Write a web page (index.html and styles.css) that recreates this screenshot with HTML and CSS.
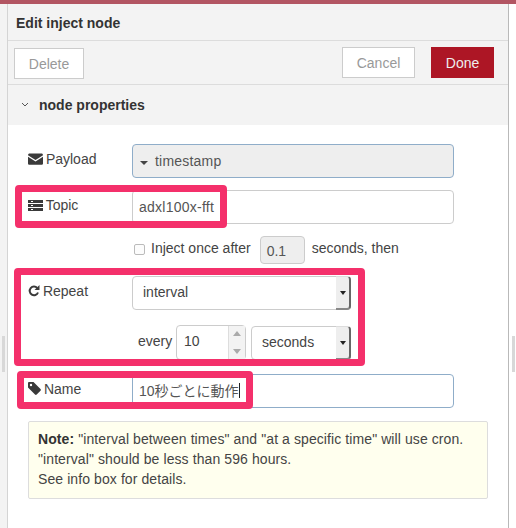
FILE: index.html
```html
<!DOCTYPE html>
<html lang="ja">
<head>
<meta charset="utf-8">
<title>Edit inject node</title>
<link rel="stylesheet" href="styles.css">
</head>
<body>
<div class="topbar"></div>
<div class="shell">
  <aside class="gutter gutter-left"><span class="handle"></span></aside>
  <main class="tray">
    <h1 class="tray-title">Edit inject node</h1>
    <div class="toolbar">
      <button class="btn btn-delete">Delete</button>
      <div class="toolbar-right">
        <button class="btn btn-cancel">Cancel</button>
        <button class="btn btn-done">Done</button>
      </div>
    </div>
    <div class="section-head">
      <svg class="chev" width="8" height="5" viewBox="0 0 8 5"><path d="M1 1l3 3 3-3" fill="none" stroke="#555" stroke-width="1"/></svg>
      <span>node properties</span>
    </div>
    <div class="form">
      <div class="row row-payload">
        <label class="lbl">
          <svg class="ico" width="15" height="12" viewBox="0 0 15 12"><path d="M0 2.2C0 1 .8.5 1.5.5h12c.8 0 1.500.6 1.500 1.700L7.500 7 0 2.200z" fill="#3a3a3a"/><path d="M0 3.800l7.500 4.700L15 3.800v6.700c0 .8-.7 1.300-1.500 1.300h-12C.7 11.800 0 11.300 0 10.500z" fill="#3a3a3a"/></svg>
          Payload
        </label>
        <div class="typed"><span class="caret-down"></span>timestamp</div>
      </div>
      <div class="row row-topic">
        <label class="lbl">
          <svg class="ico" width="15" height="11" viewBox="0 0 15 11"><path d="M0 0h15v3H0zM0 4h15v3H0zM0 8h15v3H0z" fill="#3a3a3a"/><path d="M3 1.500h2M3 5.500h2M3 9.500h2" stroke="#fff" stroke-width="1"/></svg>
          Topic
        </label>
        <div class="field field-topic">adxl100x-fft</div>
      </div>
      <div class="row row-once">
        <span class="check"></span>
        <span class="once-text">Inject once after</span>
        <span class="mini">0.1</span>
        <span class="once-text">seconds, then</span>
      </div>
      <div class="row row-repeat">
        <label class="lbl">
          <svg class="ico ico-r" width="12" height="12" viewBox="0 0 12 12"><path d="M10 7.500A4.300 4.300 0 1 1 9.200 3" fill="none" stroke="#3a3a3a" stroke-width="2"/><path d="M11.500 0v5h-5z" fill="#3a3a3a"/></svg>
          Repeat
        </label>
        <div class="select select-wide">interval<span class="arrow"></span></div>
      </div>
      <div class="row row-every">
        <span class="every">every</span>
        <div class="spin">10<span class="spin-btns"><i class="up"></i><i class="down"></i></span></div>
        <div class="select select-unit">seconds<span class="arrow"></span></div>
      </div>
      <div class="row row-name">
        <label class="lbl">
          <svg class="ico ico-r" width="13" height="13" viewBox="0 0 13 13"><path d="M0 1.200C0 .5.500 0 1.200 0h4.300l7 7c.5.5.5 1.200 0 1.700l-3.800 3.800c-.5.5-1.200.5-1.700 0l-7-7zM3 4.200a1.200 1.200 0 1 0 0-2.400 1.200 1.200 0 0 0 0 2.400z" fill="#3a3a3a"/></svg>
          Name
        </label>
        <div class="field field-focus">10秒ごとに動作<span class="cursor"></span></div>
      </div>
      <div class="note"><b>Note:</b> "interval between times" and "at a specific time" will use cron.<br>"interval" should be less than 596 hours.<br>See info box for details.</div>
    </div>
  </main>
  <aside class="gutter gutter-right"><span class="handle"></span></aside>
</div>
<div class="mark mark-topic"></div>
<div class="mark mark-repeat"></div>
<div class="mark mark-name"></div>
</body>
</html>
```
FILE: styles.css
```css
* { box-sizing: border-box; }
html, body { margin: 0; height: 100%; }
body {
  position: relative;
  width: 516px;
  height: 528px;
  overflow: hidden;
  background: #fff;
  color: #444;
  font: 14px/20px "Liberation Sans", "Noto Sans CJK JP", sans-serif;
}
.topbar { height: 4px; background: #b25562; }
.shell { display: flex; height: 524px; }
.gutter { position: relative; background: #f3f3f3; }
.gutter-left { width: 8px; border-right: 1px solid #d4d4d4; }
.gutter-right { flex: 1; background: #fff; border-left: 1px solid #b9b9b9; }
.handle { position: absolute; top: 332px; width: 3px; height: 36px; background: #d8d8d8; }
.gutter-left .handle { left: 2px; }
.gutter-right .handle { left: 3px; }
.tray { width: 500px; display: flex; flex-direction: column; }
.tray-title {
  margin: 0;
  height: 37px;
  padding-left: 8px;
  background: #f3f3f3;
  border-bottom: 1px solid #dcdcdc;
  font-size: 14px;
  font-weight: bold;
  line-height: 38px;
  color: #333;
}
.toolbar {
  height: 44px;
  display: flex;
  justify-content: space-between;
  padding: 7px 14px 0 6px;
  background: #f3f3f3;
  border-bottom: 1px solid #dcdcdc;
}
.toolbar-right { display: flex; gap: 16px; margin-top: -1px; }
.btn {
  height: 31px;
  padding: 0;
  border: 1px solid #ccc;
  background: #fff;
  color: #999;
  font: 14px "Liberation Sans", sans-serif;
}
.btn-delete { width: 70px; }
.btn-cancel { width: 73px; }
.btn-done { width: 63px; background: #ad1625; border-color: #ad1625; color: #eee; }
.section-head {
  height: 40px;
  display: flex;
  align-items: center;
  padding: 0 0 1px 13px;
  background: #f3f3f3;
  font-weight: bold;
  color: #333;
}
.chev { margin-right: 10px; }
.form { padding-top: 19px; }
.row { display: flex; }
.lbl { width: 124px; padding: 5px 0 0 20px; color: #444; white-space: nowrap; }
.ico { margin-right: -1px; vertical-align: -1px; }
.ico-r { margin-right: -1px; }
.typed, .field {
  width: 322px;
  height: 34px;
  border: 1px solid #ccc;
  border-radius: 4px;
  line-height: 33px;
  padding-left: 6px;
  color: #555;
}
.typed {
  background: #eee;
  border-color: #8fadc9;
  padding-left: 7px;
  letter-spacing: .2px;
}
.field-topic { letter-spacing: .25px; }
.caret-down {
  display: inline-block;
  margin-right: 7px;
  vertical-align: 1px;
  border: 4px solid transparent;
  border-top-color: #444;
  border-bottom: 0;
}
.row-topic { margin-top: 12px; }
.row-once { margin-top: 12px; height: 28px; align-items: center; padding-left: 126px; color: #444; }
.once-text { position: relative; top: -2px; }
.check {
  width: 11px; height: 11px;
  border: 1px solid #bbb;
  border-radius: 2px;
  margin: -2px 6px 0 0;
  background: #fcfcfc;
}
.mini {
  width: 45px; height: 28px;
  margin: 0 7px 0 9px;
  padding-left: 6px;
  border: 1px solid #ccc;
  border-radius: 4px;
  background: #eee;
  line-height: 28px;
  color: #555;
}
.row-repeat { margin-top: 12px; }
.select {
  position: relative;
  height: 34px;
  border: 1px solid #ccc;
  border-radius: 4px;
  background: #fff;
  line-height: 30px;
  padding-left: 10px;
  color: #444;
}
.select-wide { width: 219px; }
.select-unit { width: 100px; margin-left: 5px; }
.arrow {
  position: absolute;
  top: -1px; right: -1px; bottom: -1px;
  width: 15px;
  background: #eee;
  border-right: 2px solid #666;
  border-bottom: 2px solid #888;
  border-top: 1px solid #ddd;
  border-radius: 0 4px 4px 0;
}
.arrow::after {
  content: "";
  position: absolute;
  top: 14px; left: 4px;
  border: 3px solid transparent;
  border-top: 4px solid #222;
  border-bottom: 0;
}
.row-every { margin-top: 15px; padding-left: 116px; height: 35px; align-items: center; }
.every { width: 52px; padding: 0 0 3px 14px; color: #444; }
.spin {
  position: relative;
  width: 70px; height: 35px;
  border: 1px solid #ccc;
  border-radius: 4px;
  line-height: 31px;
  padding-left: 7px;
  color: #444;
}
.spin-btns {
  position: absolute;
  top: 0; right: 0; bottom: 0;
  width: 17px;
  background: #f3f3f3;
  border-left: 1px solid #ddd;
}
.spin-btns i {
  position: absolute;
  left: 4px;
  border: 4px solid transparent;
}
.spin-btns .up { top: 5px; border-top: 0; border-bottom: 5px solid #aaa; }
.spin-btns .down { bottom: 5px; border-bottom: 0; border-top: 5px solid #aaa; }
.row-name { margin-top: 14px; }
.field-focus { border-color: #8fadc9; line-height: 33px; }
.cursor { display: inline-block; width: 1px; height: 15px; background: #222; vertical-align: -2px; }
.note {
  width: 460px;
  height: 78px;
  margin: 13px 0 0 20px;
  padding: 7px 9px;
  border: 1px solid #ddd;
  border-radius: 2px;
  background: #ffffee;
  color: #444;
  letter-spacing: .09px;
}
.note b { color: #333; }
.mark {
  position: absolute;
  border: 7px solid #f4306b;
  border-radius: 4px;
}
.mark-topic { left: 15px; top: 185px; width: 212px; height: 43px; }
.mark-repeat { left: 14px; top: 268px; width: 351px; height: 98px; }
.mark-name { left: 17px; top: 371px; width: 236px; height: 38px; }
```
